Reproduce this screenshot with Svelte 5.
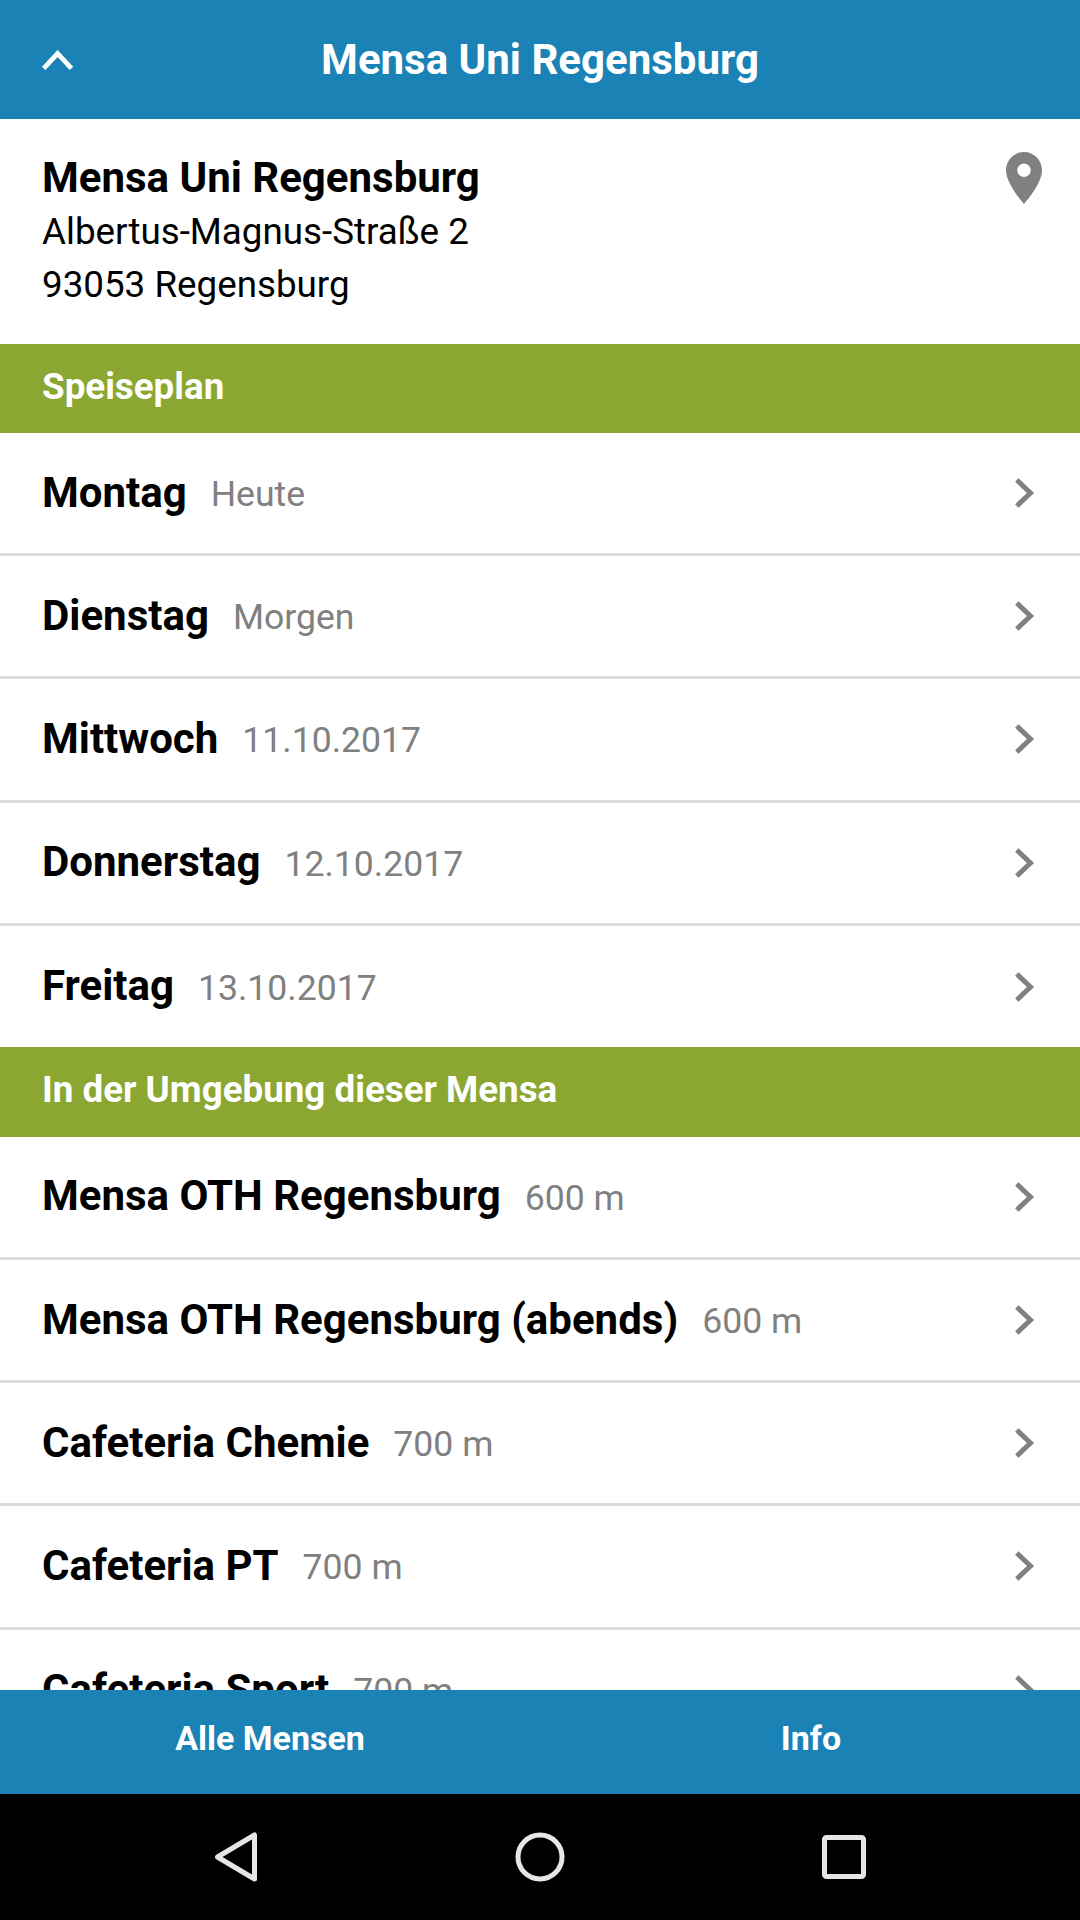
<script>
	const days = [
		{ name: 'Montag', note: 'Heute' },
		{ name: 'Dienstag', note: 'Morgen' },
		{ name: 'Mittwoch', note: '11.10.2017' },
		{ name: 'Donnerstag', note: '12.10.2017' },
		{ name: 'Freitag', note: '13.10.2017' }
	];
	const nearby = [
		{ name: 'Mensa OTH Regensburg', note: '600 m' },
		{ name: 'Mensa OTH Regensburg (abends)', note: '600 m' },
		{ name: 'Cafeteria Chemie', note: '700 m' },
		{ name: 'Cafeteria PT', note: '700 m' },
		{ name: 'Cafeteria Sport', note: '700 m' }
	];
</script>

{#snippet row(item)}
	<li class="row">
		<span class="name">{item.name}</span>
		<span class="note">{item.note}</span>
		<svg class="chevron" width="24" height="32" viewBox="0 0 24 32">
			<path d="M2.800 3 L16.500 16 L2.800 29" fill="none" stroke="#808080" stroke-width="5" />
		</svg>
	</li>
{/snippet}

<div class="screen">
	<header>
		<svg class="up" width="34" height="24" viewBox="0 0 34 24">
			<path d="M2.700 20.300 L16.600 5.600 L30.500 20.300" fill="none" stroke="#fff" stroke-width="4.800" />
		</svg>
		<h1>Mensa Uni Regensburg</h1>
	</header>

	<main>
		<section class="info">
			<div>
				<h2>Mensa Uni Regensburg</h2>
				<p>Albertus-Magnus-Straße 2</p>
				<p>93053 Regensburg</p>
			</div>
			<svg class="pin" width="36" height="52" viewBox="0 0 36 52">
				<path fill-rule="evenodd" fill="#808080" d="M18 0C8 0 0 8.200 0 18.300C0 32 18 52 18 52S36 32 36 18.300C36 8.200 28 0 18 0ZM18 11.600A6.700 6.700 0 1 1 18 25A6.700 6.700 0 1 1 18 11.600Z" />
			</svg>
		</section>

		<h3>Speiseplan</h3>
		<ul>
			{#each days as item}
				{@render row(item)}
			{/each}
		</ul>

		<h3>In der Umgebung dieser Mensa</h3>
		<ul>
			{#each nearby as item}
				{@render row(item)}
			{/each}
		</ul>
	</main>

	<footer>
		<a href="#alle">Alle Mensen</a>
		<a class="info-link" href="#info">Info</a>
	</footer>

	<nav>
		<svg width="44" height="52" viewBox="0 0 44 52">
			<path d="M40.500 4 L40.500 48 L3.500 26 Z" fill="none" stroke="#e6e6e6" stroke-width="5" stroke-linejoin="round" />
		</svg>
		<svg width="50" height="50" viewBox="0 0 50 50">
			<circle cx="25" cy="25" r="22" fill="none" stroke="#e6e6e6" stroke-width="5" />
		</svg>
		<svg width="44" height="44" viewBox="0 0 44 44">
			<rect x="2.500" y="2.500" width="39" height="39" rx="2" fill="none" stroke="#e6e6e6" stroke-width="5" />
		</svg>
	</nav>
</div>

<style>
	:global(body) {
		margin: 0;
		background: #fff;
		font-family: Roboto, "Liberation Sans", sans-serif;
	}
	.screen {
		width: 1080px;
		height: 1920px;
		display: flex;
		flex-direction: column;
		overflow: hidden;
	}
	header {
		height: 119px;
		flex: none;
		background: #1b82b5;
		display: flex;
		align-items: center;
		justify-content: center;
		position: relative;
	}
	.up {
		position: absolute;
		left: 41px;
		top: 48px;
	}
	h1 {
		margin: 0;
		color: #fff;
		font-size: 42px;
		font-weight: 700;
	}
	main {
		flex: 1;
		min-height: 0;
		overflow: hidden;
	}
	.info {
		height: 224.500px;
		box-sizing: border-box;
		padding: 34px 38px 0 42px;
		display: flex;
		justify-content: space-between;
		align-items: flex-start;
	}
	h2 {
		margin: 0 0 2px;
		font-size: 42px;
		line-height: 50px;
		font-weight: 700;
		color: #000;
	}
	p {
		margin: 0;
		font-size: 36.750px;
		line-height: 53px;
		color: #000;
	}
	.pin {
		margin-top: -1px;
	}
	h3 {
		margin: 0;
		height: 89.500px;
		box-sizing: border-box;
		padding-left: 42px;
		background: #8ba732;
		color: #fff;
		font-size: 36.750px;
		font-weight: 700;
		line-height: 86px;
	}
	ul {
		margin: 0;
		padding: 0;
		list-style: none;
	}
	.row {
		height: 123.200px;
		box-sizing: border-box;
		padding: 0 42px;
		display: flex;
		align-items: center;
		border-bottom: 3px solid #dcdcdc;
	}
	.row:last-child {
		height: 121.500px;
		border-bottom: 0;
	}
	.name {
		font-size: 42px;
		font-weight: 700;
		color: #000;
		margin-top: -2px;
	}
	.note {
		margin-left: 24px;
		font-size: 35.600px;
		color: #808080;
		margin-top: 2px;
	}
	.chevron {
		margin-left: auto;
	}
	footer {
		height: 104px;
		flex: none;
		background: #1b82b5;
		display: grid;
		grid-template-columns: 1fr 1fr;
		align-items: center;
		text-align: center;
	}
	footer a {
		color: #fff;
		font-size: 34px;
		font-weight: 700;
		text-decoration: none;
		margin-bottom: 8px;
	}
	.info-link {
		padding-left: 2px;
	}
	nav {
		height: 126px;
		flex: none;
		background: #000;
		display: grid;
		grid-template-columns: 1fr 1fr 1fr;
		justify-items: center;
		align-items: center;
		padding: 0 84px;
		box-sizing: border-box;
	}
</style>
